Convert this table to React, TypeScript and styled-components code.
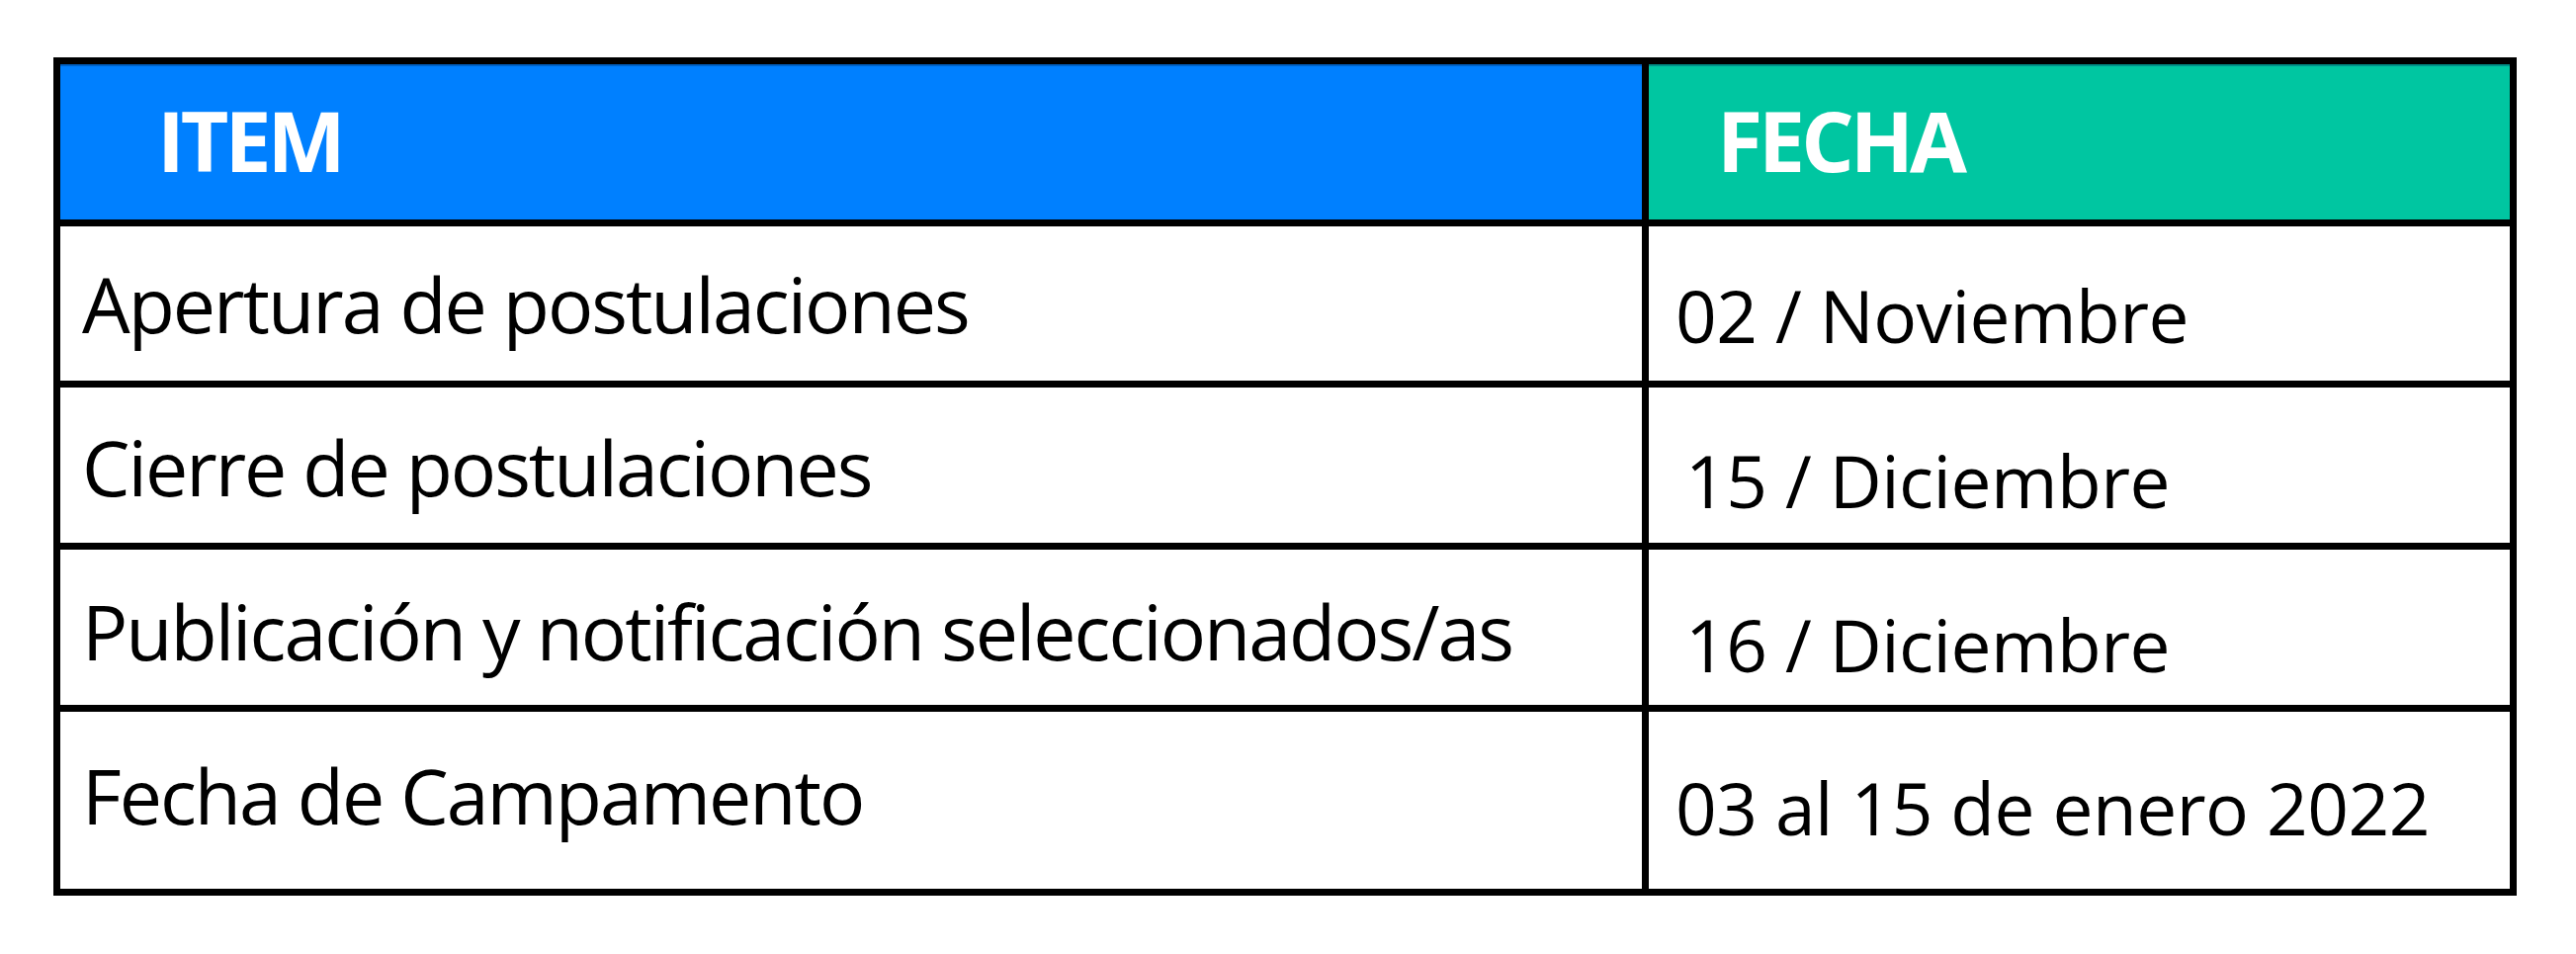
import React from "react";
import styled, { createGlobalStyle } from "styled-components";

const GlobalStyle = createGlobalStyle`
  html, body {
    margin: 0;
    padding: 0;
    background: #ffffff;
  }
  body {
    font-family: "Open Sans", "Noto Sans", "Liberation Sans", sans-serif;
  }
`;

const Page = styled.div`
  width: 2606px;
  height: 965px;
  box-sizing: border-box;
  padding: 58px 0 0 54px;
  background: #ffffff;
`;

const Table = styled.div`
  display: grid;
  grid-template-columns: 1600px 871px;
  grid-template-rows: 157px 156px 157px 157px 179px;
  gap: 7px;
  padding: 7px;
  width: max-content;
  background: #000000;
`;

const HeadCell = styled.div<{ $bg: string; $left: number }>`
  background: ${(p) => p.$bg};
  box-shadow: inset 0 2px 0 rgba(0, 40, 90, 0.35);
  color: #ffffff;
  font-family: "Open Sans", "Noto Sans", sans-serif;
  font-weight: 700;
  font-size: 84px;
  line-height: 84px;
  letter-spacing: -4px;
  padding: 35px 0 0 ${(p) => p.$left}px;
  box-sizing: border-box;
  white-space: nowrap;
`;

const ItemCell = styled.div<{ $top: number }>`
  background: #ffffff;
  color: #000000;
  font-family: "Open Sans", "Noto Sans", sans-serif;
  font-weight: 400;
  font-size: 77px;
  line-height: 77px;
  letter-spacing: -2px;
  padding: ${(p) => p.$top}px 0 0 22px;
  box-sizing: border-box;
  white-space: nowrap;
`;

const DateCell = styled.div<{ $top: number; $left: number }>`
  background: #ffffff;
  color: #000000;
  font-family: "Open Sans", "Noto Sans", sans-serif;
  font-weight: 400;
  font-size: 73px;
  line-height: 73px;
  letter-spacing: -0.5px;
  padding: ${(p) => p.$top}px 0 0 ${(p) => p.$left}px;
  box-sizing: border-box;
  white-space: nowrap;
`;

const rows = [
  { item: "Apertura de postulaciones", itemTop: 40, date: "02 / Noviembre", dateTop: 53, dateLeft: 27 },
  { item: "Cierre de postulaciones", itemTop: 42, date: "15 / Diciembre", dateTop: 57, dateLeft: 37 },
  { item: "Publicación y notificación seleccionados/as", itemTop: 44, date: "16 / Diciembre", dateTop: 59, dateLeft: 37 },
  { item: "Fecha de Campamento", itemTop: 46, date: "03 al 15 de enero 2022", dateTop: 60, dateLeft: 27 },
];

export default function App() {
  return (
    <>
      <GlobalStyle />
      <Page>
        <Table>
          <HeadCell $bg="#0080ff" $left={98}>ITEM</HeadCell>
          <HeadCell $bg="#00c6a1" $left={69}>FECHA</HeadCell>
          {rows.map((r) => (
            <React.Fragment key={r.item}>
              <ItemCell $top={r.itemTop}>{r.item}</ItemCell>
              <DateCell $top={r.dateTop} $left={r.dateLeft}>{r.date}</DateCell>
            </React.Fragment>
          ))}
        </Table>
      </Page>
    </>
  );
}
